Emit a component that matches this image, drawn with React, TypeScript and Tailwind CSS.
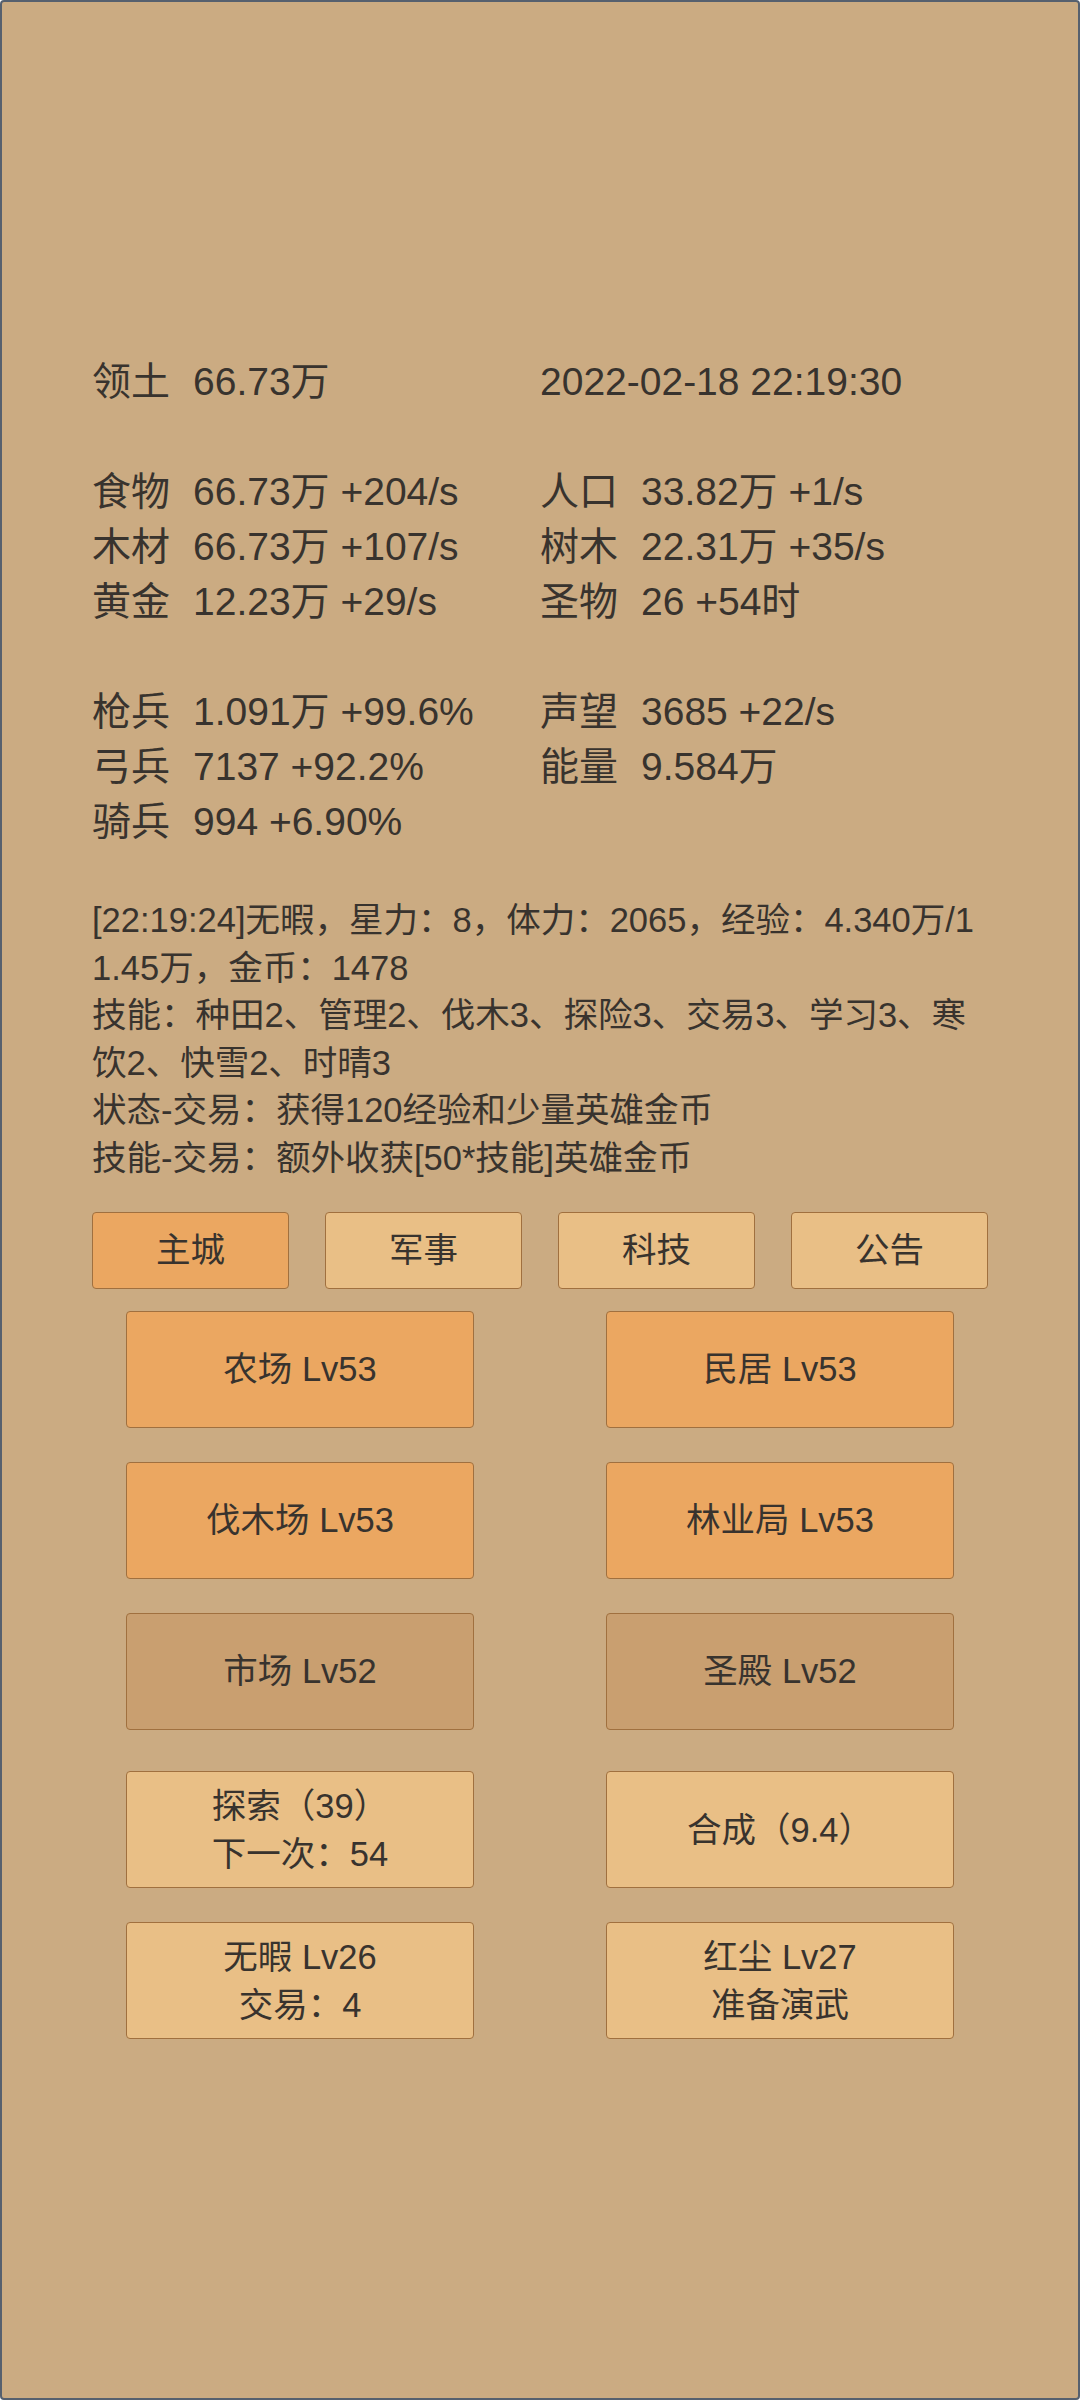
const font = { fontFamily: '"Liberation Sans", "Noto Sans CJK SC", sans-serif' };

const statsTop = [
  [
    ['食物', '66.73万 +204/s'],
    ['木材', '66.73万 +107/s'],
    ['黄金', '12.23万 +29/s'],
  ],
  [
    ['人口', '33.82万 +1/s'],
    ['树木', '22.31万 +35/s'],
    ['圣物', '26 +54时'],
  ],
];

const statsArmy = [
  [
    ['枪兵', '1.091万 +99.6%'],
    ['弓兵', '7137 +92.2%'],
    ['骑兵', '994 +6.90%'],
  ],
  [
    ['声望', '3685 +22/s'],
    ['能量', '9.584万'],
  ],
];

const tabs = ['主城', '军事', '科技', '公告'];

const buildings = [
  { name: '农场 Lv53', tone: 'bg-[#eba761]' },
  { name: '民居 Lv53', tone: 'bg-[#eba761]' },
  { name: '伐木场 Lv53', tone: 'bg-[#eba761]' },
  { name: '林业局 Lv53', tone: 'bg-[#eba761]' },
  { name: '市场 Lv52', tone: 'bg-[#c99f70]' },
  { name: '圣殿 Lv52', tone: 'bg-[#c99f70]' },
];

const actions = [
  ['探索（39）', '下一次：54'],
  ['合成（9.4）'],
  ['无暇 Lv26', '交易：4'],
  ['红尘 Lv27', '准备演武'],
];

function Stat({ label, value }: { label: string; value: string }) {
  return (
    <div className="flex h-[55px] items-center">
      <span className="w-[101px] shrink-0">{label}</span>
      <span>{value}</span>
    </div>
  );
}

function StatBlock({ cols }: { cols: string[][][] }) {
  return (
    <div className="grid grid-cols-2">
      {cols.map((col, i) => (
        <div key={i}>
          {col.map(([l, v]) => (
            <Stat key={l} label={l} value={v} />
          ))}
        </div>
      ))}
    </div>
  );
}

export default function App() {
  return (
    <div
      className="h-[2400px] w-[1080px] overflow-hidden rounded-[4px] border-[2px] border-[#56606e] bg-[#cbab82] text-[#38332e]"
      style={font}
    >
      <div className="px-[90px] pt-[353px] text-[39px]">
        <div className="grid grid-cols-2">
          <Stat label="领土" value="66.73万" />
          <div className="flex h-[55px] items-center">2022-02-18 22:19:30</div>
        </div>
        <div className="h-[55px]" />
        <StatBlock cols={statsTop} />
        <div className="h-[55px]" />
        <StatBlock cols={statsArmy} />

        <div className="mt-[47px] break-all text-[34.5px] leading-[47.5px]">
          <p>[22:19:24]无暇，星力：8，体力：2065，经验：4.340万/11.45万，金币：1478</p>
          <p>技能：种田2、管理2、伐木3、探险3、交易3、学习3、寒饮2、快雪2、时晴3</p>
          <p>状态-交易：获得120经验和少量英雄金币</p>
          <p>技能-交易：额外收获[50*技能]英雄金币</p>
        </div>

        <div className="mt-[30px] flex justify-between text-[34.5px]">
          {tabs.map((t, i) => (
            <div
              key={t}
              className={`flex h-[77px] w-[197px] items-center justify-center rounded-[4px] border-[1.5px] border-[#a0703f] ${
                i === 0 ? 'bg-[#eba761]' : 'bg-[#e9bf86]'
              }`}
            >
              {t}
            </div>
          ))}
        </div>

        <div className="mt-[22px] grid grid-cols-[348px_348px] justify-between gap-y-[34px] px-[34px] text-[34.5px]">
          {buildings.map((b) => (
            <div
              key={b.name}
              className={`flex h-[117px] items-center justify-center rounded-[4px] border-[1.5px] border-[#a0703f] ${b.tone}`}
            >
              {b.name}
            </div>
          ))}
        </div>

        <div className="mt-[41px] grid grid-cols-[348px_348px] justify-between gap-y-[34px] px-[34px] text-[34.5px] leading-[48px]">
          {actions.map((a) => (
            <div
              key={a[0]}
              className="flex h-[117px] flex-col items-center justify-center rounded-[4px] border-[1.5px] border-[#a0703f] bg-[#e9bf86]"
            >
              {a.map((line) => (
                <span key={line}>{line}</span>
              ))}
            </div>
          ))}
        </div>
      </div>
    </div>
  );
}
